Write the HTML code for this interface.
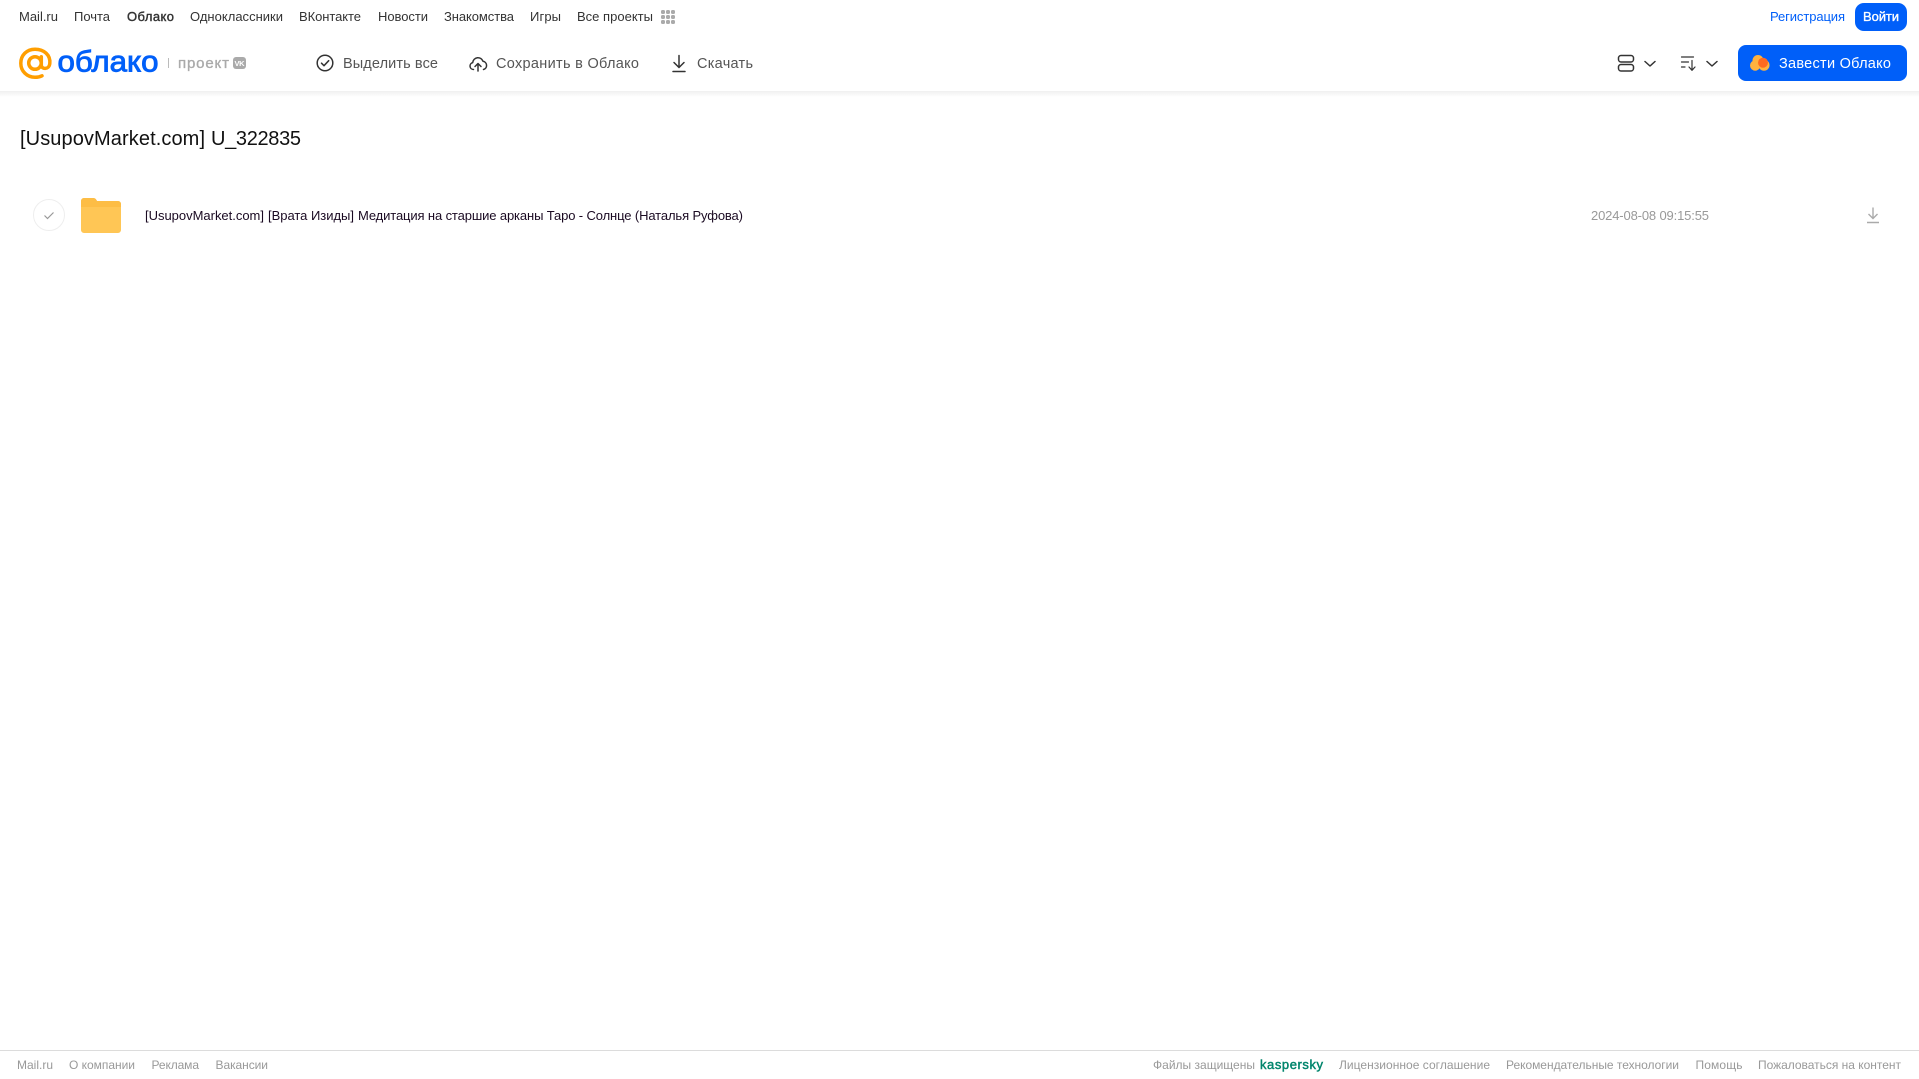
<!DOCTYPE html>
<html lang="ru"><head><meta charset="utf-8"><title>Облако</title>
<style>
html,body{margin:0;padding:0;width:1919px;height:1079px;overflow:hidden;background:#fff}
svg{position:absolute;left:0;top:0;display:block}
text{font-family:"Liberation Sans",sans-serif}
.n{font-size:13px;fill:#333}
.t{font-size:14.5px;fill:#555}
.f{font-size:12px;fill:#999}
</style></head><body>
<svg width="1919" height="1079" viewBox="0 0 1919 1079" xmlns="http://www.w3.org/2000/svg">
<defs><linearGradient id="sh" x1="0" y1="0" x2="0" y2="1"><stop offset="0" stop-color="#f0f0f0"/><stop offset="1" stop-color="#fff"/></linearGradient></defs>
<rect x="0" y="91" width="1919" height="6" fill="url(#sh)"/>

<text class="n" x="19" y="21" textLength="39">Mail.ru</text>
<text class="n" x="74" y="21" textLength="36">Почта</text>
<text class="n" x="127" y="21" textLength="47" stroke="#333" stroke-width=".4">Облако</text>
<text class="n" x="190" y="21" textLength="93">Одноклассники</text>
<text class="n" x="299" y="21" textLength="62">ВКонтакте</text>
<text class="n" x="378" y="21" textLength="50">Новости</text>
<text class="n" x="444" y="21" textLength="70">Знакомства</text>
<text class="n" x="530" y="21" textLength="31">Игры</text>
<text class="n" x="577" y="21" textLength="76">Все проекты</text>
<g fill="#aaa"><rect x="661" y="10" width="4" height="4" rx="1.500"/><rect x="666" y="10" width="4" height="4" rx="1.500"/><rect x="671" y="10" width="4" height="4" rx="1.500"/><rect x="661" y="15" width="4" height="4" rx="1.500"/><rect x="666" y="15" width="4" height="4" rx="1.500"/><rect x="671" y="15" width="4" height="4" rx="1.500"/><rect x="661" y="20" width="4" height="4" rx="1.500"/><rect x="666" y="20" width="4" height="4" rx="1.500"/><rect x="671" y="20" width="4" height="4" rx="1.500"/></g>

<text x="1770" y="21" font-size="13" fill="#005ff9" textLength="75">Регистрация</text>
<rect x="1855" y="3" width="52" height="28" rx="9" fill="#005ff9"/>
<text x="1863" y="21" font-size="13" fill="#fff" stroke="#fff" stroke-width=".35" textLength="36">Войти</text>

<!-- logo -->
<g fill="none" stroke="#ff9e00" stroke-width="3.500" stroke-linecap="round"><circle cx="35" cy="63" r="6.300"/><path d="M41.300 56.800v8.200c0 4.600 7.800 5 8.500-1.500.9-8.500-5.800-14.300-14.800-14.300-8.400 0-14.200 6.200-14.200 14 0 8.100 6.200 14.100 14.200 14.100 2.700 0 5-.5 7-1.500"/></g>
<text x="57.500" y="71.500" font-size="30" fill="#005ff9" textLength="101" lengthAdjust="spacingAndGlyphs" stroke="#005ff9" stroke-width=".9">облако</text>
<rect x="168" y="58" width="1" height="10" fill="#bbb"/>
<text x="178" y="68" font-size="15" fill="#aaa" stroke="#aaa" stroke-width=".35" textLength="51">проект</text>
<rect x="233" y="57" width="13" height="12" rx="3" fill="#aaa"/>
<text x="234.500" y="66" font-size="7.500" font-weight="700" fill="#fff" textLength="10">VK</text>

<!-- toolbar -->
<g fill="none" stroke="#333" stroke-width="1.500" stroke-linecap="round" stroke-linejoin="round">
<circle cx="325" cy="63" r="7.800"/><path d="M321.500 63.200l2.500 2.500 4.700-5"/>
<path d="M473.500 69.500a3.500 3.500 0 0 1-.8-6.900 5.300 5.300 0 0 1 10.300-1.300 4.200 4.200 0 0 1 .5 8.200"/><path d="M478 71v-7.500M475 66.500l3-3 3 3"/>
<path d="M679 55.500v12M674 62.500l5 5 5-5"/><path d="M673 71.500h12"/>
<rect x="1618.500" y="55.500" width="15" height="6.500" rx="2.500"/><rect x="1618.500" y="64.500" width="15" height="6.500" rx="2.500"/>
<path d="M1645 61.500l5 4.500 5-4.500M1707 61.500l5 4.500 5-4.500"/>
<path d="M1681.500 57h12M1681.500 62h7M1681.500 67h3.500M1692 60.500v9.500M1689 67l3 3.300 3-3.300" stroke-width="1.200"/>
</g>
<text class="t" x="343" y="68" textLength="95">Выделить все</text>
<text class="t" x="496" y="68" textLength="143">Сохранить в Облако</text>
<text class="t" x="697" y="68" textLength="56">Скачать</text>

<rect x="1738" y="45" width="169" height="36" rx="8" fill="#005ff9"/>
<g fill="#ffb23e"><circle cx="1755.200" cy="65.500" r="5.200"/><circle cx="1758" cy="60.500" r="5.500"/><circle cx="1764" cy="65.200" r="5.500"/></g>
<circle cx="1763" cy="62.700" r="5" fill="#ff6a1f"/>
<text x="1779" y="68" font-size="14.500" fill="#fff" textLength="112">Завести Облако</text>

<!-- title -->
<text x="20" y="145" font-size="20" fill="#111" textLength="185">[UsupovMarket.com]</text>
<text x="211" y="145" font-size="20" fill="#111" textLength="90">U_322835</text>

<!-- row -->
<circle cx="49" cy="215" r="15.500" fill="#fff" stroke="#eee"/>
<path d="M44.500 215.500l3 3 6-6" fill="none" stroke="#999" stroke-width="1.200"/>
<path d="M81 201a3 3 0 0 1 3-3h9c2 0 3 1 4 3h21a3 3 0 0 1 3 3v26a3 3 0 0 1-3 3H84a3 3 0 0 1-3-3z" fill="#ffc655"/>
<path d="M81 207h40v-3a3 3 0 0 0-3-3H97c-1-2-2-3-4-3h-9a3 3 0 0 0-3 3z" fill="#fdbd45"/>
<text x="145" y="220" font-size="13" fill="#1a0a22" textLength="119">[UsupovMarket.com]</text>
<text x="268" y="220" font-size="13" fill="#1a0a22" textLength="86">[Врата Изиды]</text>
<text x="358" y="220" font-size="13" fill="#1a0a22" textLength="385">Медитация на старшие арканы Таро - Солнце (Наталья Руфова)</text>
<text x="1591" y="220" font-size="13" fill="#999" textLength="118">2024-08-08 09:15:55</text>
<path d="M1873 207.500v11M1868.500 214l4.500 4.500 4.500-4.500M1867 222.500h12" fill="none" stroke="#aaa" stroke-width="1.400"/>

<!-- footer -->
<rect x="0" y="1050" width="1919" height="1" fill="#dcdcdc"/>
<text class="f" x="17" y="1069" textLength="36">Mail.ru</text>
<text class="f" x="69" y="1069" textLength="66">О компании</text>
<text class="f" x="151.500" y="1069" textLength="47.500">Реклама</text>
<text class="f" x="215.500" y="1069" textLength="52.500">Вакансии</text>
<text class="f" x="1153" y="1069" textLength="102">Файлы защищены</text>
<text x="1260" y="1069" font-size="13" fill="#00856c" stroke="#00856c" stroke-width=".45" textLength="63">kaspersky</text>
<text class="f" x="1339" y="1069" textLength="151">Лицензионное соглашение</text>
<text class="f" x="1506" y="1069" textLength="173">Рекомендательные технологии</text>
<text class="f" x="1695.500" y="1069" textLength="47">Помощь</text>
<text class="f" x="1758" y="1069" textLength="143">Пожаловаться на контент</text>
</svg>
</body></html>
